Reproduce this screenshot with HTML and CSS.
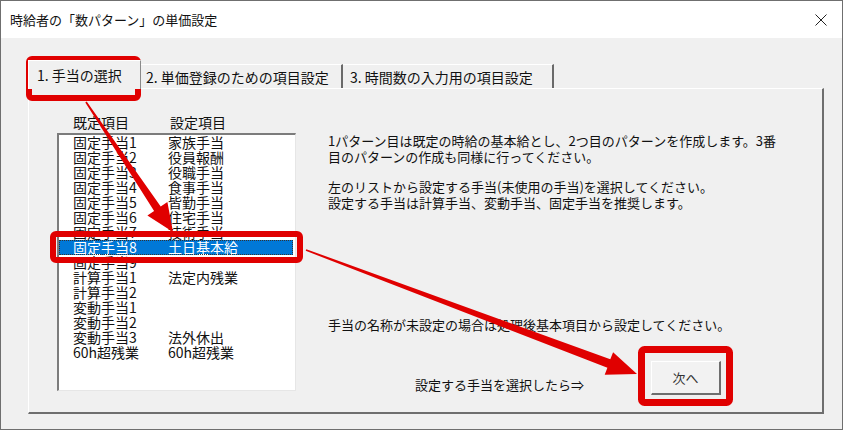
FILE: index.html
```html
<!DOCTYPE html>
<html lang="ja">
<head>
<meta charset="utf-8">
<title>時給者の「数パターン」の単価設定</title>
<link rel="stylesheet" href="styles.css">
</head>
<body>
<div class="window">
  <div class="titlebar">
    <span class="title">時給者の「数パターン」の単価設定</span>
    <svg class="close" width="12" height="12" viewBox="0 0 12 12"><path d="M0.5 0.5 L11.5 11.5 M11.5 0.5 L0.5 11.5" stroke="#222" stroke-width="1" fill="none"/></svg>
  </div>
  <div class="client">
    <div class="tabstrip">
      <div class="tab tab-active">1. 手当の選択</div>
      <div class="tab tab-2">2. 単価登録のための項目設定</div>
      <div class="tab tab-3">3. 時間数の入力用の項目設定</div>
    </div>
    <div class="panel">
      <div class="leftcol">
        <div class="heads"><span class="c1">既定項目</span><span class="c2">設定項目</span></div>
        <div class="list">
          <div class="row"><span class="c1">固定手当1</span><span>家族手当</span></div>
          <div class="row"><span class="c1">固定手当2</span><span>役員報酬</span></div>
          <div class="row"><span class="c1">固定手当3</span><span>役職手当</span></div>
          <div class="row"><span class="c1">固定手当4</span><span>食事手当</span></div>
          <div class="row"><span class="c1">固定手当5</span><span>皆勤手当</span></div>
          <div class="row"><span class="c1">固定手当6</span><span>住宅手当</span></div>
          <div class="row"><span class="c1">固定手当7</span><span>技術手当</span></div>
          <div class="row sel"><span class="c1">固定手当8</span><span>土日基本給</span></div>
          <div class="row"><span class="c1">固定手当9</span><span></span></div>
          <div class="row"><span class="c1">計算手当1</span><span>法定内残業</span></div>
          <div class="row"><span class="c1">計算手当2</span><span></span></div>
          <div class="row"><span class="c1">変動手当1</span><span></span></div>
          <div class="row"><span class="c1">変動手当2</span><span></span></div>
          <div class="row"><span class="c1">変動手当3</span><span>法外休出</span></div>
          <div class="row"><span class="c1">60h超残業</span><span>60h超残業</span></div>
        </div>
      </div>
      <div class="rightcol">
        <p class="p1">1パターン目は既定の時給の基本給とし、2つ目のパターンを作成します。3番<br>目のパターンの作成も同様に行ってください。</p>
        <p class="p2">左のリストから設定する手当(未使用の手当)を選択してください。<br>設定する手当は計算手当、変動手当、固定手当を推奨します。</p>
        <p class="p3">手当の名称が未設定の場合は処理後基本項目から設定してください。</p>
        <div class="actions">
          <span class="hint">設定する手当を選択したら⇒</span>
          <button class="btn" type="button">次へ</button>
        </div>
      </div>
    </div>
  </div>
  <svg class="overlay" width="843" height="430" viewBox="0 0 843 430">
    <g fill="none" stroke="#e00000" stroke-linejoin="round">
      <rect x="29" y="59" width="109" height="39" rx="3" stroke-width="6"/>
      <rect x="53" y="234" width="247" height="26" rx="3" stroke-width="6"/>
      <rect x="641.5" y="349.5" width="88" height="53" rx="3" stroke-width="7"/>
    </g>
    <g fill="#e00000">
      <polygon points="85.3,102.4 154.1,210.9 147.4,215.4 173,232 167.4,202 160.7,206.5 86.7,101.5"/>
      <polygon points="305.7,250.8 607.4,367.7 604.7,374.7 637,374 613.1,352.3 610.3,359.3 306.3,249.2"/>
    </g>
  </svg>
</div>
</body>
</html>
```
FILE: styles.css
```css
html, body {
  margin: 0;
  padding: 0;
}
body {
  width: 843px;
  height: 430px;
  overflow: hidden;
  background: #f0f0f0;
  font-family: "Noto Sans CJK JP", "Noto Sans", sans-serif;
  color: #111;
}
.window {
  position: relative;
  box-sizing: border-box;
  width: 843px;
  height: 430px;
  border: 1px solid #6f6f6f;
  display: flex;
  flex-direction: column;
}
.titlebar {
  height: 37px;
  flex: none;
  background: #fff;
  display: flex;
  align-items: center;
  justify-content: space-between;
  padding: 0 15px 0 9px;
}
.title {
  font-size: 13px;
  color: #111;
}
.close {
  display: block;
}
.client {
  flex: 1;
  background: #f0f0f0;
}
.tabstrip {
  display: flex;
  align-items: flex-end;
  height: 50px;
  padding-left: 27px;
  box-sizing: border-box;
}
.tab {
  font-size: 14px;
  line-height: 18px;
  box-sizing: border-box;
  white-space: nowrap;
}
.tab-active {
  width: 113px;
  height: 29px;
  padding: 5px 0 0 8px;
  border-top: 1px solid #fff;
  border-left: 1px solid #fff;
  border-right: 1px solid #8a8a8a;
  margin-bottom: -1px;
  position: relative;
  z-index: 1;
  background: #f0f0f0;
}
.tab-2 {
  width: 202px;
  height: 24px;
  padding: 3px 0 0 5px;
  border-top: 1px solid #fff;
  border-right: 2px solid #6a6a6a;
}
.tab-3 {
  width: 211px;
  height: 24px;
  padding: 3px 0 0 7px;
  border-top: 1px solid #fff;
  border-right: 2px solid #6a6a6a;
}
.panel {
  box-sizing: border-box;
  margin-left: 27px;
  width: 796px;
  height: 326px;
  border-top: 1px solid #fff;
  border-left: 1px solid #fff;
  border-right: 2px solid #6e6e6e;
  border-bottom: 2px solid #6e6e6e;
  display: flex;
}
.leftcol {
  padding: 25px 0 0 28px;
  width: 239px;
  flex: none;
}
.heads {
  display: flex;
  font-size: 14px;
  line-height: 16px;
  height: 16px;
  margin-bottom: 3px;
  padding-left: 16px;
}
.heads .c1 {
  width: 97px;
}
.list {
  box-sizing: border-box;
  width: 239px;
  height: 258px;
  background: #fff;
  border-top: 2px solid #7c7c7c;
  border-left: 2px solid #7c7c7c;
  border-right: 1px solid #e6e6e6;
  border-bottom: 1px solid #e6e6e6;
  overflow: hidden;
}
.row {
  display: flex;
  height: 15px;
  line-height: 15px;
  font-size: 14px;
  padding-left: 14px;
  white-space: nowrap;
  margin-right: 2px;
  box-sizing: border-box;
}
.row .c1 {
  width: 95px;
  flex: none;
}
.row.sel {
  background: #0078d7;
  color: #fff;
  outline: 1px dotted #333;
  outline-offset: -1px;
}
.rightcol {
  padding: 44px 0 0 32px;
  font-size: 13px;
  line-height: 16px;
  flex: 1;
}
.rightcol p {
  margin: 0;
  white-space: nowrap;
}
.p2 {
  margin-top: 14px !important;
}
.p3 {
  margin-top: 106px !important;
}
.actions {
  display: flex;
  align-items: flex-end;
  margin-top: 28px;
  padding-left: 87px;
}
.hint {
  width: 236px;
  flex: none;
  margin-bottom: 2px;
}
.btn {
  width: 70px;
  height: 34px;
  box-sizing: border-box;
  background: #f2f2f2;
  border-top: 1px solid #fff;
  border-left: 1px solid #fff;
  border-right: 2px solid #6e6e6e;
  border-bottom: 2px solid #6e6e6e;
  font-family: inherit;
  font-size: 13px;
  color: #333;
  padding: 0;
}
.overlay {
  position: absolute;
  left: -1px;
  top: -1px;
  pointer-events: none;
}
```
